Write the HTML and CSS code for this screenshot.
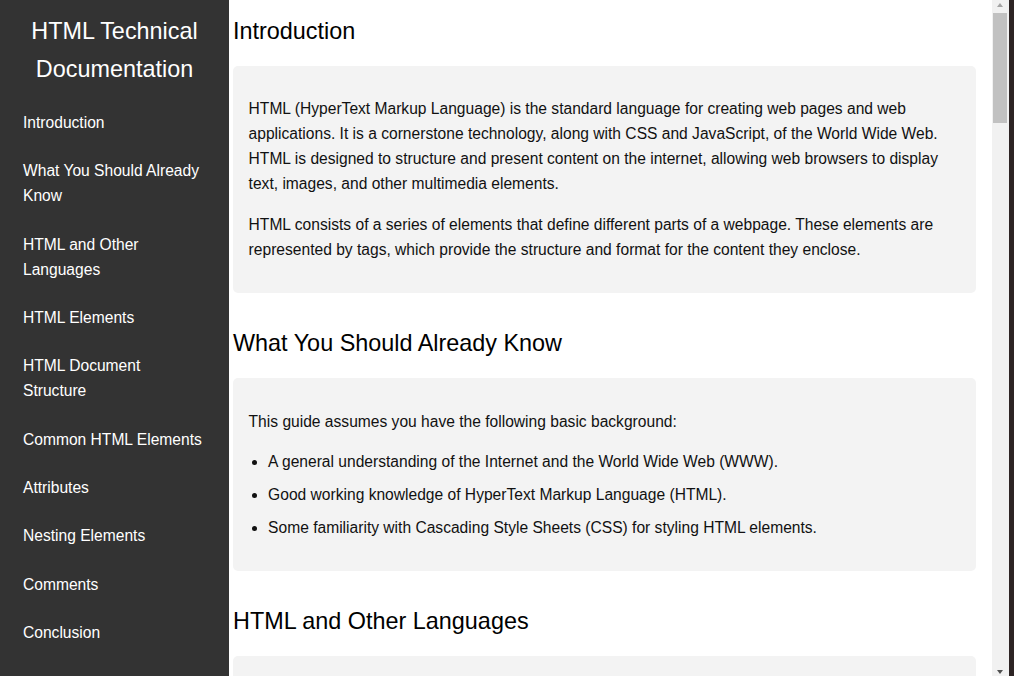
FILE: index.html
```html
<!DOCTYPE html>
<html lang="en">
<head>
<meta charset="utf-8">
<title>HTML Technical Documentation</title>
<link rel="stylesheet" href="styles.css">
</head>
<body>
<div class="page">
  <nav class="sidebar" id="navbar">
    <header class="brand">HTML Technical Documentation</header>
    <ul class="nav-list">
      <li><a class="nav-link" href="#Introduction">Introduction</a></li>
      <li><a class="nav-link" href="#What_You_Should_Already_Know">What You Should Already Know</a></li>
      <li><a class="nav-link" href="#HTML_and_Other_Languages">HTML and Other Languages</a></li>
      <li><a class="nav-link" href="#HTML_Elements">HTML Elements</a></li>
      <li><a class="nav-link" href="#HTML_Document_Structure">HTML Document Structure</a></li>
      <li><a class="nav-link" href="#Common_HTML_Elements">Common HTML Elements</a></li>
      <li><a class="nav-link" href="#Attributes">Attributes</a></li>
      <li><a class="nav-link" href="#Nesting_Elements">Nesting Elements</a></li>
      <li><a class="nav-link" href="#Comments">Comments</a></li>
      <li><a class="nav-link" href="#Conclusion">Conclusion</a></li>
    </ul>
  </nav>
  <main class="main" id="main-doc">
    <section class="main-section" id="Introduction">
      <header class="section-title">Introduction</header>
      <div class="card">
        <p>HTML (HyperText Markup Language) is the standard language for creating web pages and web applications. It is a cornerstone technology, along with CSS and JavaScript, of the World Wide Web. HTML is designed to structure and present content on the internet, allowing web browsers to display text, images, and other multimedia elements.</p>
        <p>HTML consists of a series of elements that define different parts of a webpage. These elements are represented by tags, which provide the structure and format for the content they enclose.</p>
      </div>
    </section>
    <section class="main-section" id="What_You_Should_Already_Know">
      <header class="section-title">What You Should Already Know</header>
      <div class="card">
        <p>This guide assumes you have the following basic background:</p>
        <ul class="bullets">
          <li>A general understanding of the Internet and the World Wide Web (WWW).</li>
          <li>Good working knowledge of HyperText Markup Language (HTML).</li>
          <li>Some familiarity with Cascading Style Sheets (CSS) for styling HTML elements.</li>
        </ul>
      </div>
    </section>
    <section class="main-section" id="HTML_and_Other_Languages">
      <header class="section-title">HTML and Other Languages</header>
      <div class="card">
        <p>HTML works together with other web technologies to build complete websites and applications:</p>
        <ul class="bullets">
          <li>CSS (Cascading Style Sheets) controls the presentation, layout, and visual style of HTML content.</li>
          <li>JavaScript adds interactivity and dynamic behavior to web pages.</li>
          <li>Server-side languages such as PHP, Python, or Node.js generate HTML and handle data.</li>
        </ul>
      </div>
    </section>
    <section class="main-section" id="HTML_Elements">
      <header class="section-title">HTML Elements</header>
      <div class="card">
        <p>An HTML element is defined by a start tag, some content, and an end tag. Elements are the building blocks of every HTML page.</p>
        <pre class="code">&lt;tagname&gt;Content goes here...&lt;/tagname&gt;</pre>
      </div>
    </section>
    <section class="main-section" id="HTML_Document_Structure">
      <header class="section-title">HTML Document Structure</header>
      <div class="card">
        <p>Every HTML document follows a basic structure that tells the browser how to interpret the page:</p>
        <pre class="code">&lt;!DOCTYPE html&gt;
&lt;html&gt;
  &lt;head&gt;
    &lt;title&gt;Page Title&lt;/title&gt;
  &lt;/head&gt;
  &lt;body&gt;
    &lt;h1&gt;My First Heading&lt;/h1&gt;
    &lt;p&gt;My first paragraph.&lt;/p&gt;
  &lt;/body&gt;
&lt;/html&gt;</pre>
      </div>
    </section>
    <section class="main-section" id="Common_HTML_Elements">
      <header class="section-title">Common HTML Elements</header>
      <div class="card">
        <p>Some of the most frequently used HTML elements include:</p>
        <ul class="bullets">
          <li>&lt;h1&gt; to &lt;h6&gt; for headings of different levels.</li>
          <li>&lt;p&gt; for paragraphs of text.</li>
          <li>&lt;a&gt; for hyperlinks to other pages or resources.</li>
          <li>&lt;img&gt; for embedding images.</li>
        </ul>
      </div>
    </section>
    <section class="main-section" id="Attributes">
      <header class="section-title">Attributes</header>
      <div class="card">
        <p>Attributes provide additional information about HTML elements. They are always specified in the start tag and usually come in name/value pairs like name="value".</p>
        <pre class="code">&lt;a href="https://www.example.com"&gt;Visit Example&lt;/a&gt;</pre>
      </div>
    </section>
    <section class="main-section" id="Nesting_Elements">
      <header class="section-title">Nesting Elements</header>
      <div class="card">
        <p>HTML elements can be nested, which means that elements can contain other elements. All HTML documents consist of nested HTML elements.</p>
        <pre class="code">&lt;div&gt;
  &lt;p&gt;This is a &lt;strong&gt;nested&lt;/strong&gt; element.&lt;/p&gt;
&lt;/div&gt;</pre>
      </div>
    </section>
    <section class="main-section" id="Comments">
      <header class="section-title">Comments</header>
      <div class="card">
        <p>Comments can be inserted into HTML code to make it more readable and understandable. Comments are ignored by the browser and are not displayed.</p>
        <pre class="code">&lt;!-- This is a comment --&gt;</pre>
      </div>
    </section>
    <section class="main-section" id="Conclusion">
      <header class="section-title">Conclusion</header>
      <div class="card">
        <p>HTML is the foundation of every web page. By understanding its elements, attributes, and document structure, you can build well-organized content that works together with CSS and JavaScript.</p>
      </div>
    </section>
  </main>
  <div class="scrollbar" aria-hidden="true">
    <div class="sb-button">
      <svg width="17" height="12" viewBox="0 0 17 12"><polygon points="5,7 11,7 8,3" fill="#a3a3a3"/></svg>
    </div>
    <div class="sb-track">
      <div class="sb-thumb"></div>
    </div>
    <div class="sb-button">
      <svg width="17" height="12" viewBox="0 0 17 12"><polygon points="5,6 11,6 8,10" fill="#505050"/></svg>
    </div>
  </div>
  <div class="window-edge"></div>
</div>
</body>
</html>
```

FILE: styles.css
```css
html, body {
  margin: 0;
  height: 100%;
}

body {
  font-family: "Liberation Sans", Arial, sans-serif;
  font-size: 15.6px;
  line-height: 25px;
  color: #111111;
  background: #ffffff;
  overflow: hidden;
}

.page {
  display: flex;
  height: 100vh;
  overflow: hidden;
}

.sidebar {
  flex: 0 0 229px;
  background: #333333;
  color: #ffffff;
  padding-top: 11.5px;
  overflow: hidden;
}

.brand {
  font-size: 23.4px;
  line-height: 38px;
  text-align: center;
  margin: 0 0 10.9px;
}

.nav-list {
  list-style: none;
  margin: 0;
  padding: 0;
}

.nav-link {
  display: block;
  padding: 11.68px 23px;
  color: #ffffff;
  text-decoration: none;
}

.main {
  flex: 1;
  min-width: 0;
  padding: 0 16px 40px 4px;
  overflow-y: auto;
  scrollbar-width: none;
}

.main-section {
  margin-bottom: 19.6px;
}

.section-title {
  font-size: 23.4px;
  line-height: 37.5px;
  color: #000000;
  margin: 0 0 15.6px;
  padding-top: 12.7px;
}

.card {
  background: #f3f3f3;
  border-radius: 5px;
  padding: 15px 15.6px;
}

.card p {
  margin: 15.6px 0;
}

.bullets {
  margin: 15.6px 0;
  padding-left: 19.5px;
}

.bullets li {
  margin-bottom: 8px;
}

.code {
  background: #e2e2e2;
  border-radius: 4px;
  padding: 12px;
  margin: 15.6px 0;
  font-family: "Liberation Mono", "Courier New", monospace;
  font-size: 14px;
  line-height: 1.5;
  white-space: pre;
  overflow-x: auto;
}

.scrollbar {
  flex: 0 0 17px;
  display: flex;
  flex-direction: column;
  background: #f1f1f1;
}

.sb-button {
  flex: 0 0 12px;
  height: 12px;
}

.sb-button svg {
  display: block;
}

.sb-track {
  flex: 1;
  padding: 1px 2px 0 1px;
}

.sb-thumb {
  height: 110px;
  background: #c1c1c1;
}

.window-edge {
  flex: 0 0 5px;
  background: #2d2424;
}
```
